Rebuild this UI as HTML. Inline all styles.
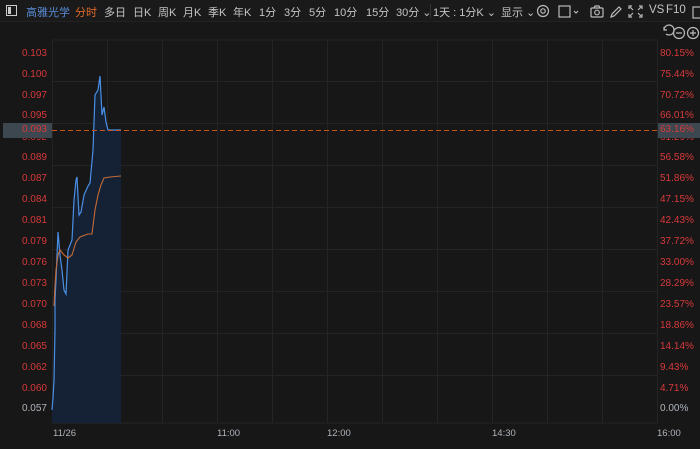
<!DOCTYPE html>
<html><head><meta charset="utf-8">
<style>
*{margin:0;padding:0;box-sizing:border-box}
body{width:700px;height:449px;background:#171717;overflow:hidden;font-family:"Liberation Sans","Noto Sans CJK SC",sans-serif;position:relative;color:#c8c8c8}
.tb{position:absolute;left:0;top:0;width:700px;height:22px;background:#1a1a1a;border-bottom:1px solid #222}
.t{position:absolute;top:4px;font-size:11px;color:#c4c4c4;white-space:nowrap}
.l{position:absolute;font-size:10px;color:#d8393b;white-space:nowrap}
.ll{right:653px;text-align:right}
.rl{left:660px}
.x{position:absolute;top:428px;font-size:9.5px;color:#aeb4bb}
.box{position:absolute;top:123px;height:15px;background:#3d4750;z-index:2}
.top{z-index:3}
</style></head><body>
<div class="tb"></div>
<div style="position:absolute;left:6px;top:5px;width:11px;height:11px;border:1.3px solid #ccc"></div>
<div style="position:absolute;left:8px;top:7px;width:3px;height:7px;background:#ccc"></div>
<div class="t" style="left:26px;color:#5b8bd6">高雅光学</div>
<div class="t" style="left:75px;color:#e0692a">分时</div>
<div class="t" style="left:104px">多日</div>
<div class="t" style="left:133px">日K</div>
<div class="t" style="left:158px">周K</div>
<div class="t" style="left:183px">月K</div>
<div class="t" style="left:208px">季K</div>
<div class="t" style="left:233px">年K</div>
<div class="t" style="left:259px">1分</div>
<div class="t" style="left:284px">3分</div>
<div class="t" style="left:309px">5分</div>
<div class="t" style="left:334px">10分</div>
<div class="t" style="left:366px">15分</div>
<div class="t" style="left:396px">30分 ⌄</div>
<div style="position:absolute;left:430px;top:4px;width:1px;height:14px;background:#333"></div>
<div class="t" style="left:433px">1天 : 1分K ⌄</div>
<div class="t" style="left:501px">显示 ⌄</div>
<svg style="position:absolute;left:535px;top:3px" width="165" height="40" fill="none" stroke="#bbb" stroke-width="1.2">
<circle cx="8" cy="8" r="5.5"/><circle cx="8" cy="8" r="2.2"/>
<rect x="24" y="3" width="11" height="11"/><path d="M39 8l2 2 2-2"/>
<rect x="56" y="5" width="12" height="9" rx="1"/><circle cx="62" cy="9.5" r="2.3"/><path d="M59 5l1-2h4l1 2"/>
<path d="M76 14l1-3 7-7 2 2-7 7z"/>
<path d="M97 3h-3v3M104 3h3v3M97 14h-3v-3M104 14h3v-3M95 4l3 3M106 4l-3 3M95 13l3-3M106 13l-3-3"/>
<rect x="158" y="4" width="10" height="11"/>
<path d="M131 31a5 5 0 1 0 -2 -4M129 24v3h3"/>
<circle cx="144" cy="30" r="5.5"/><path d="M141 30h6"/>
<circle cx="158" cy="30" r="5.5"/><path d="M155 30h6M158 27v6"/>
</svg>
<div class="t" style="left:649px;font-size:11.5px;top:4px">VS</div>
<div class="t" style="left:666px;font-size:11.5px;top:4px">F10</div>
<svg style="position:absolute;left:0;top:0" width="700" height="449">
<g stroke="#242424" stroke-width="1">
<path d="M52 40H658M52 423H658"/>
<path d="M52.5 40V423M107.5 40V423M162.5 40V423M217.5 40V423M272.5 40V423M327.5 40V423M382.5 40V423M437.5 40V423M492.5 40V423M547.5 40V423M602.5 40V423M657.5 40V423"/>
<path d="M52 81.5H658M52 123.5H658M52 165.5H658M52 207.5H658M52 249.5H658M52 291.5H658M52 333.5H658M52 375.5H658"/>
</g>
<path d="M52 423L52 410 53 398 54 380 55 330 55 300 56 280 58 232 60 255 62 270 64 290 66 294 68 250 70 245 72 240 74 200 76 180 77 177 79 215 81 212 84 195 88 186 90 183 93 150 95 95 98 90 100 76 102 115 104 107 106 122 108 130 121 130 121 423Z" fill="#15243a" opacity="0.9"/>
<polyline points="52,410 53,398 54,380 55,330 55,300 56,280 58,232 60,255 62,270 64,290 66,294 68,250 70,245 72,240 74,200 76,180 77,177 79,215 81,212 84,195 88,186 90,183 93,150 95,95 98,90 100,76 102,115 104,107 106,122 108,130 121,130" fill="none" stroke="#4a8fe6" stroke-width="1.2"/>
<polyline points="54,306 55,285 56,270 58,255 60,250 64,255 68,258 72,255 76,242 80,237 88,234 92,234 95,210 98,195 101,185 104,178 110,177 121,176" fill="none" stroke="#c26a35" stroke-width="1.1"/>
<path d="M52 130.5H658" stroke="#c8561c" stroke-dasharray="5,3" stroke-width="1"/>
</svg>
<div class="box" style="left:3px;width:49px"></div>
<div class="box" style="left:658px;width:42px"></div>
<div class="l ll" style="top:48px">0.103</div>
<div class="l ll" style="top:69px">0.100</div>
<div class="l ll" style="top:90px">0.097</div>
<div class="l ll" style="top:110px">0.095</div>
<div class="l ll" style="top:132px">0.092</div>
<div class="l ll top" style="top:124px">0.093</div>
<div class="l ll" style="top:152px">0.089</div>
<div class="l ll" style="top:173px">0.087</div>
<div class="l ll" style="top:194px">0.084</div>
<div class="l ll" style="top:215px">0.081</div>
<div class="l ll" style="top:236px">0.079</div>
<div class="l ll" style="top:257px">0.076</div>
<div class="l ll" style="top:278px">0.073</div>
<div class="l ll" style="top:299px">0.070</div>
<div class="l ll" style="top:320px">0.068</div>
<div class="l ll" style="top:341px">0.065</div>
<div class="l ll" style="top:362px">0.062</div>
<div class="l ll" style="top:383px">0.060</div>
<div class="l ll" style="top:403px;color:#aeb4bb">0.057</div>
<div class="l rl" style="top:48px">80.15%</div>
<div class="l rl" style="top:69px">75.44%</div>
<div class="l rl" style="top:90px">70.72%</div>
<div class="l rl" style="top:110px">66.01%</div>
<div class="l rl" style="top:132px">61.29%</div>
<div class="l rl top" style="top:124px">63.16%</div>
<div class="l rl" style="top:152px">56.58%</div>
<div class="l rl" style="top:173px">51.86%</div>
<div class="l rl" style="top:194px">47.15%</div>
<div class="l rl" style="top:215px">42.43%</div>
<div class="l rl" style="top:236px">37.72%</div>
<div class="l rl" style="top:257px">33.00%</div>
<div class="l rl" style="top:278px">28.29%</div>
<div class="l rl" style="top:299px">23.57%</div>
<div class="l rl" style="top:320px">18.86%</div>
<div class="l rl" style="top:341px">14.14%</div>
<div class="l rl" style="top:362px">9.43%</div>
<div class="l rl" style="top:383px">4.71%</div>
<div class="l rl" style="top:403px;color:#aeb4bb">0.00%</div>
<div class="x" style="left:53px">11/26</div>
<div class="x" style="left:217px">11:00</div>
<div class="x" style="left:327px">12:00</div>
<div class="x" style="left:492px">14:30</div>
<div class="x" style="left:657px">16:00</div>
</body></html>
